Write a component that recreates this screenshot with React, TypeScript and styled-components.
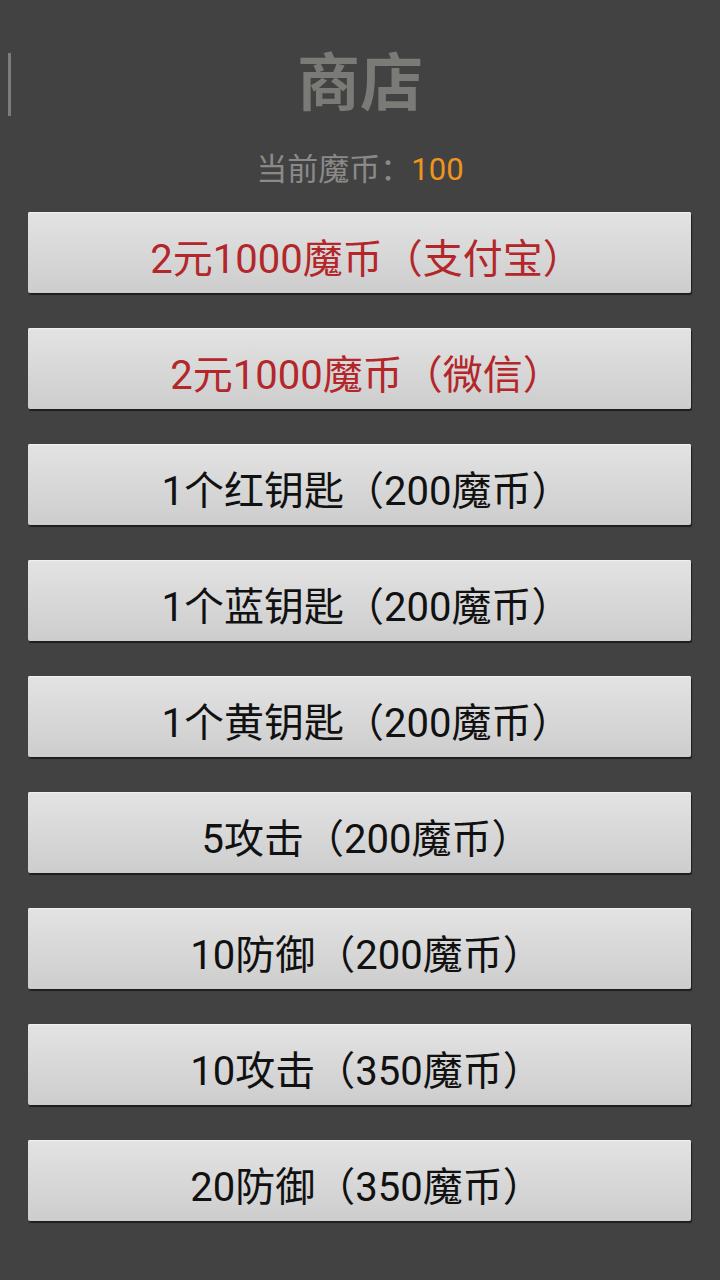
import React from "react";
import styled, { createGlobalStyle } from "styled-components";

const GlobalStyle = createGlobalStyle`
  html, body {
    margin: 0;
    padding: 0;
    background: #424242;
  }
  body {
    font-family: Roboto, "Noto Sans CJK SC", sans-serif;
  }
`;

const Page = styled.div`
  width: 720px;
  min-height: 1280px;
  background: #424242;
  box-sizing: border-box;
  padding-top: 48px;
`;

const Header = styled.div`
  display: grid;
  grid-template-columns: 1fr auto 1fr;
  align-items: center;
  height: 72px;
`;

const Cursor = styled.div`
  justify-self: start;
  width: 3px;
  height: 63px;
  margin-left: 8px;
  background: #7c7c7a;
`;

const Title = styled.h1`
  margin: 0;
  font-size: 63px;
  font-weight: bold;
  line-height: 72px;
  color: #7a7a76;
`;

const Balance = styled.div`
  margin-top: 30px;
  text-align: center;
  font-size: 31px;
  line-height: 40px;
  color: #8a8a88;
`;

const Coins = styled.span`
  color: #f0941c;
`;

const List = styled.div`
  display: flex;
  flex-direction: column;
  gap: 35px;
  margin-top: 22px;
  padding: 0 29px 0 28px;
`;

const ShopButton = styled.button<{ $pay?: boolean }>`
  height: 81px;
  border: none;
  border-radius: 2px;
  background: linear-gradient(#e3e3e3, #cdcdcd);
  box-shadow: 1px 2px 1px rgba(0, 0, 0, 0.55), inset 0 1px 0 #f0f0f0;
  font-family: Roboto, "Noto Sans CJK SC", sans-serif;
  font-size: 40px;
  color: ${(props) => (props.$pay ? "#b3262a" : "#111111")};
  padding: 6px 0 0 14px;
  cursor: pointer;
`;

const items = [
  { label: "2元1000魔币（支付宝）", pay: true },
  { label: "2元1000魔币（微信）", pay: true },
  { label: "1个红钥匙（200魔币）" },
  { label: "1个蓝钥匙（200魔币）" },
  { label: "1个黄钥匙（200魔币）" },
  { label: "5攻击（200魔币）" },
  { label: "10防御（200魔币）" },
  { label: "10攻击（350魔币）" },
  { label: "20防御（350魔币）" },
];

const App: React.FC = () => {
  return (
    <>
      <GlobalStyle />
      <Page>
        <Header>
          <Cursor />
          <Title>商店</Title>
          <div />
        </Header>
        <Balance>
          当前魔币：<Coins>100</Coins>
        </Balance>
        <List>
          {items.map((item) => (
            <ShopButton key={item.label} $pay={item.pay}>
              {item.label}
            </ShopButton>
          ))}
        </List>
      </Page>
    </>
  );
};

export default App;
